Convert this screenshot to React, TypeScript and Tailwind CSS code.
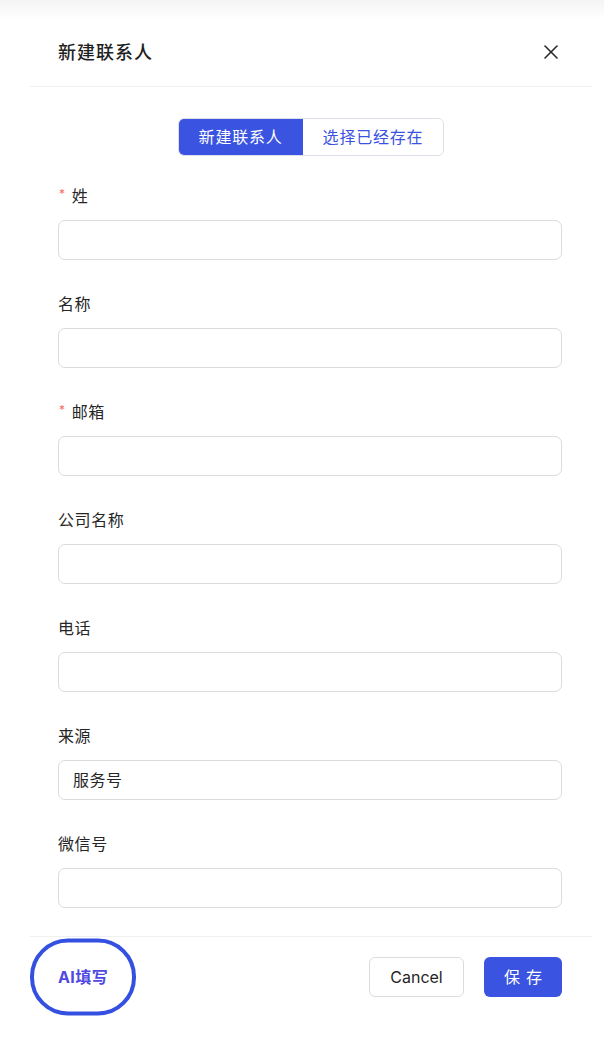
import { X } from "lucide-react";

const fields = [
	{ label: "姓", required: true, value: "" },
	{ label: "名称", required: false, value: "" },
	{ label: "邮箱", required: true, value: "" },
	{ label: "公司名称", required: false, value: "" },
	{ label: "电话", required: false, value: "" },
	{ label: "来源", required: false, value: "服务号" },
	{ label: "微信号", required: false, value: "" },
];

export default function App() {
	return (
		<div className="relative min-h-[1054px] w-[604px] bg-white font-['Inter','Noto_Sans_CJK_SC',sans-serif] text-[#1f1f1f]">
			<div className="h-[20px] w-full bg-gradient-to-b from-[#f4f4f4] to-white" />

			<div className="ml-[30px] w-[562px]">
				{/* header */}
				<div className="flex h-[67px] items-center justify-between pl-[28px] pr-[29px] border-b border-[#efefef]">
					<h1 className="text-[18px] font-medium tracking-[1px] -mt-[2px]">新建联系人</h1>
					<X className="w-[24px] h-[24px] text-[#2a2a2a] -mt-[2px]" strokeWidth={1.6} />
				</div>

				<div className="pl-[28px] pr-[30px]">
					<div className="flex justify-center mt-[31px] ml-[2px]">
						<div className="flex h-[38px] rounded-[6px] border border-[#dcdfe6] overflow-hidden text-[16px] tracking-[0.8px]">
							<button className="px-[20px] bg-[#3a53e0] text-white">新建联系人</button>
							<button className="px-[20px] bg-white text-[#3a53e0]">选择已经存在</button>
						</div>
					</div>

					<div className="mt-[28px] flex flex-col gap-[32px]">
						{fields.map((f) => (
							<div key={f.label}>
								<div className="flex items-center h-[24px] text-[16px] text-[#262626] tracking-[0.6px]">
									{f.required && <span className="text-[#f56c6c] text-[12px] mr-[6px] ml-[1px] -mt-[5px]">*</span>}
									{f.label}
								</div>
								<div className="mt-[12px] h-[40px] rounded-[7px] border border-[#dcdcdc] flex items-center px-[14px] text-[16px] text-[#262626] tracking-[0.5px]">
									{f.value}
								</div>
							</div>
						))}
					</div>
				</div>

				{/* footer */}
				<div className="mt-[28px] border-t border-[#efefef] flex items-center justify-between pl-[28px] pr-[30px] pt-[20px]">
					<button className="relative text-[16px] font-bold text-[#4f48e2] tracking-[0.4px]">
						AI填写
						<span className="absolute left-[-28px] top-1/2 -translate-y-1/2 w-[106px] h-[77px] rounded-[38px] border-[4px] border-[#3450e0]" />
					</button>
					<div className="flex gap-[20px]">
						<button className="h-[40px] w-[95px] rounded-[6px] border border-[#dcdcdc] bg-white text-[16px] text-[#262626]">Cancel</button>
						<button className="h-[40px] w-[78px] rounded-[6px] bg-[#3a53e0] text-[16px] text-white tracking-[6px] pl-[6px]">保存</button>
					</div>
				</div>
			</div>
		</div>
	);
}
